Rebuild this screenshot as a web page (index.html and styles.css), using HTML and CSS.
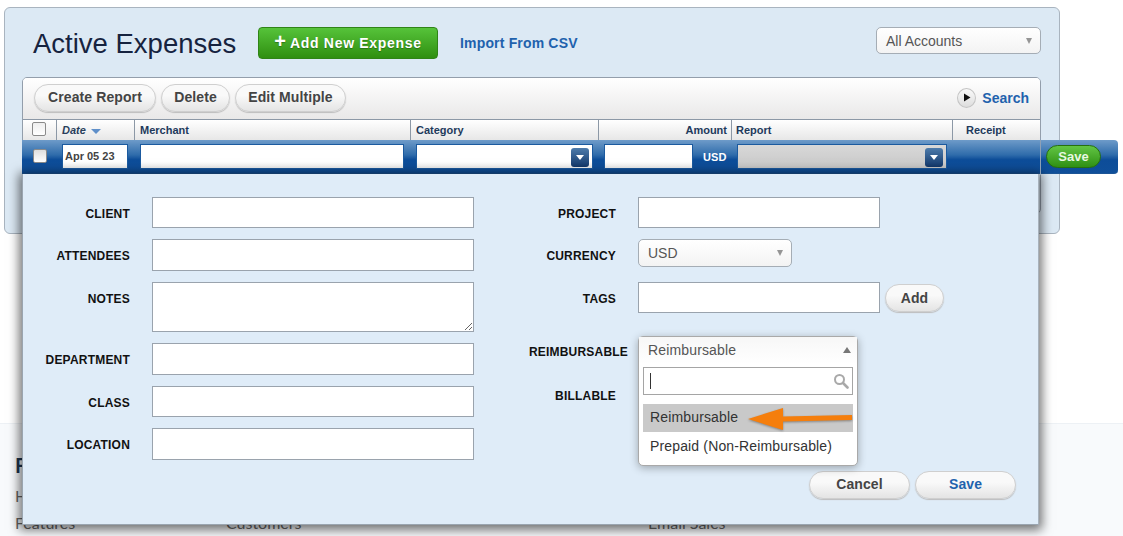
FILE: index.html
```html
<!DOCTYPE html>
<html lang="en">
<head>
<meta charset="utf-8">
<title>Active Expenses</title>
<link rel="stylesheet" href="styles.css">
</head>
<body>
<main class="panel">
  <header class="head">
    <h1 class="title">Active Expenses</h1>
    <button class="add-btn"><span class="plus">+</span> Add New Expense</button>
    <a class="import">Import From CSV</a>
    <div class="select accounts"><span>All Accounts</span><i class="tri"></i></div>
  </header>
  <section class="card">
    <div class="toolbar">
      <button class="pill pill-create">Create Report</button>
      <button class="pill pill-delete">Delete</button>
      <button class="pill pill-edit">Edit Multiple</button>
      <div class="search">
        <span class="play"><svg width="8" height="9" viewBox="0 0 8 9"><path d="M1 0.5 L7.5 4.5 L1 8.5 Z" fill="#111"/></svg></span>
        <a>Search</a>
      </div>
    </div>
    <div class="thead">
      <div class="th th-check"><span class="check"></span></div>
      <div class="th th-date"><em>Date</em><i class="sort"></i></div>
      <div class="th th-pad">Merchant</div>
      <div class="th th-pad">Category</div>
      <div class="th th-right">Amount</div>
      <div class="th">Report</div>
      <div class="th th-receipt">Receipt</div>
    </div>
    <div class="edit-row">
      <span class="check row-check"></span>
      <div class="cell date-cell">Apr 05 23</div>
      <div class="cell merchant-cell"></div>
      <div class="cell cat-cell"><span class="drop"><i></i></span></div>
      <div class="cell amount-cell"></div>
      <span class="usd">USD</span>
      <div class="cell report-cell"><span class="drop"><i></i></span></div>
      <button class="save-green">Save</button>
    </div>
    <div class="modal">
      <div class="columns">
        <div class="col">
          <div class="row"><label class="lbl">CLIENT</label><input class="field wide"></div>
          <div class="row"><label class="lbl">ATTENDEES</label><input class="field wide"></div>
          <div class="row"><label class="lbl">NOTES</label><textarea class="field wide notes"></textarea></div>
          <div class="row"><label class="lbl">DEPARTMENT</label><input class="field wide"></div>
          <div class="row"><label class="lbl">CLASS</label><input class="field wide"></div>
          <div class="row"><label class="lbl">LOCATION</label><input class="field wide"></div>
        </div>
        <div class="col">
          <div class="row"><label class="lbl">PROJECT</label><input class="field mid"></div>
          <div class="row"><label class="lbl">CURRENCY</label><div class="select currency"><span>USD</span><i class="tri"></i></div></div>
          <div class="row row-tags"><label class="lbl">TAGS</label><input class="field mid"><button class="pill add-tag">Add</button></div>
          <div class="row row-reimb">
            <label class="lbl lbl-long">REIMBURSABLE</label>
            <div class="dropdown">
              <div class="dd-head"><span>Reimbursable</span><i class="tri up"></i></div>
              <div class="dd-search">
                <span class="caret"></span>
                <svg width="16" height="16" viewBox="0 0 16 16"><circle cx="6.5" cy="6.5" r="4.5" fill="none" stroke="#a9a9a9" stroke-width="2"/><path d="M10 10 L14.5 14.5" stroke="#a9a9a9" stroke-width="2.6" stroke-linecap="round"/></svg>
              </div>
              <div class="dd-item active">Reimbursable</div>
              <div class="dd-item">Prepaid (Non-Reimbursable)</div>
              <svg class="arrow" width="110" height="28" viewBox="0 0 110 28"><path d="M2 15 L37 4 L37 12.500 L106 11 L106 16 L37 17.500 L37 26 Z" fill="#f57e0c"/></svg>
            </div>
          </div>
          <div class="row row-bill"><label class="lbl">BILLABLE</label></div>
        </div>
      </div>
      <div class="actions">
        <button class="pill wide-pill">Cancel</button>
        <button class="pill wide-pill blue">Save</button>
      </div>
    </div>
  </section>
</main>
<footer class="footer">
  <div class="fcol fcol-1"><h4>Features</h4><p>Home</p><p>Features</p></div>
  <div class="fcol fcol-2"><p>Customers</p></div>
  <div class="fcol"><p>Email Sales</p></div>
</footer>
</body>
</html>
```
FILE: styles.css
```css
* { box-sizing: border-box; }
html, body { margin: 0; height: 536px; overflow: hidden; background: #fff; }
body { font-family: "Liberation Sans", Arial, sans-serif; color: #222; }
button { font-family: inherit; cursor: pointer; }

.panel {
  margin: 7px 0 0 4px; width: 1056px; height: 227px;
  background: #dce9f4; border: 1px solid #a9b4bf; border-radius: 6px;
  position: relative; z-index: 2;
}
.head { display: flex; align-items: flex-start; height: 69px; padding: 19px 18px 0 28px; }
.title { margin: 0; font-size: 27.500px; line-height: 33px; font-weight: 400; color: #16233f; width: 225px; }
.add-btn {
  width: 180px; height: 32px; padding: 0 0 2px; border: 1px solid #2f8416; border-radius: 4px;
  background: linear-gradient(#56c33a, #2f8f10); color: #fff;
  font-size: 14px; font-weight: 700; letter-spacing: .7px; text-shadow: 0 1px 1px rgba(0,0,0,.3);
}
.plus { font-size: 20px; line-height: 14px; letter-spacing: 0; }
.import { margin: 8px 0 0 22px; font-size: 14px; font-weight: 700; color: #1f62ad; letter-spacing: .17px; }
.select {
  display: flex; align-items: center; justify-content: space-between;
  border: 1px solid #a5adb5; border-radius: 5px; background: linear-gradient(#fff, #f3f3f3);
  color: #555; font-size: 14px; padding: 0 8px 0 9px;
}
.accounts { margin-left: auto; width: 165px; height: 27px; }
.tri { width: 0; height: 0; border-left: 3.500px solid transparent; border-right: 3.500px solid transparent; border-top: 6px solid #959595; }
.tri.up { border-left-width: 4.500px; border-right-width: 4.500px; border-top: 0; border-bottom: 6px solid #777; }

.card {
  position: relative; margin-left: 17px; width: 1019px; height: 137px;
  border: 1px solid #939eab; border-radius: 5px; background: #dce9f4;
}
.card::after {
  content: ""; position: absolute; right: -1px; top: 60px; width: 1px; height: 37px; background: #8ea0b5;
}
.toolbar {
  display: flex; align-items: center; gap: 5px; height: 42px; padding: 0 11px 2px;
  background: linear-gradient(#fff, #e9e8e8); border-bottom: 1px solid #8c98a6; border-radius: 4px 4px 0 0;
}
.pill {
  height: 28px; padding: 0 0 2px; border: 1px solid #cfcfcf; border-radius: 14px;
  background: linear-gradient(#f9f9f9 40%, #e4e4e4); box-shadow: 0 1px 1px #bdbdbd;
  color: #444; font-size: 14px; font-weight: 700; letter-spacing: .1px;
}
.pill-create { width: 122px; }
.pill-delete { width: 69px; }
.pill-edit { width: 111px; }
.search { margin-left: auto; display: flex; align-items: center; gap: 6px; font-size: 14px; font-weight: 700; color: #1f62ad; }
.play {
  width: 19px; height: 20px; border-radius: 50%; border: 1px solid #c4c4c4; background: linear-gradient(#fafafa, #ddd);
  display: flex; align-items: center; justify-content: center;
}
.thead {
  display: grid; grid-template-columns: 34px 78px 276px 188px 133px 221px 87px; height: 20px;
  background: linear-gradient(#fff, #e7e7e7);
}
.th {
  font-size: 11px; font-weight: 700; line-height: 20px; color: #1e3a5c; padding-left: 4px;
  border-right: 1px solid #8c98a6; white-space: nowrap;
}
.th:last-child { border-right: 0; }
.th-pad { padding-left: 5px; }
.th-check { padding: 2px 0 0 9px; }
.th-date { padding-left: 5px; display: flex; align-items: center; gap: 5px; }
.th-date em { color: #2a3f5c; }
.th-right { text-align: right; padding: 0 4px 0 0; }
.th-receipt { padding-left: 13px; }
.sort { width: 0; height: 0; border-left: 5px solid transparent; border-right: 5px solid transparent; border-top: 5px solid #5f8fc9; margin-top: 2px; }
.check { display: block; width: 14px; height: 14px; border: 1px solid #8a8a8a; border-radius: 2px; background: linear-gradient(#eee, #fff); }

.edit-row {
  position: relative; display: flex; align-items: center; margin-left: -1px; width: 1096px; height: 34px;
  background: linear-gradient(#6e9bc9 0, #2f6cab 45%, #0d4d99 60%, #0f4f9a 100%);
  border-bottom: 1px solid #1c5596; border-radius: 0 4px 4px 0; padding: 0 0 1px 11px;
}
.row-check { background: linear-gradient(#ddd, #fff); }
.cell {
  height: 25px; background: linear-gradient(#fff 70%, #f2f2f2); border: 1px solid #1b5a9f;
  font-size: 11px; font-weight: 700; line-height: 23px; color: #444; position: relative;
}
.date-cell { width: 66px; margin-left: 15px; padding-left: 2px; }
.merchant-cell { width: 264px; margin-left: 12px; }
.cat-cell { width: 177px; margin-left: 12px; }
.amount-cell { width: 89px; margin-left: 11px; }
.report-cell { width: 210px; margin-left: 10px; background: linear-gradient(#d8d8d8, #c8c8c8); }
.usd { width: 24px; margin-left: 10px; font-size: 11px; font-weight: 700; letter-spacing: .1px; color: #fff; position: relative; top: 1px; }
.drop {
  position: absolute; right: 3px; top: 3px; width: 18px; height: 19px; border-radius: 3px;
  background: linear-gradient(#4d7bab, #12386b); display: flex; align-items: center; justify-content: center;
}
.drop i { width: 0; height: 0; border-left: 4px solid transparent; border-right: 4px solid transparent; border-top: 5px solid #fff; }
.save-green {
  margin-left: 99px; width: 55px; height: 23px; padding: 0; border: 1px solid #26700f; border-radius: 12px;
  background: linear-gradient(#62c544, #2f9014); color: #e8f8e0; font-size: 13px; font-weight: 700;
}

.modal {
  position: relative; margin-left: -1px; width: 1017px; height: 351px; display: flex; flex-direction: column;
  background: #dfecf8; border: 1px solid #9aa5b0; border-right-color: #a8b2bc; border-top: 0;
  box-shadow: 0 2px 10px 3px rgba(0,0,0,.55);
}
.columns { display: flex; padding-top: 22.800px; }
.col { width: 486px; }
.row { display: flex; align-items: flex-start; margin-bottom: 11px; }
.row:last-child { margin-bottom: 0; }
.lbl {
  width: 107px; margin-right: 22px; height: 31.500px; text-align: right; font-size: 12px; font-weight: 700;
  letter-spacing: .2px; line-height: 35px; color: #111; white-space: nowrap; flex: none;
}
.lbl-long { width: 119px; margin-right: 10px; line-height: 32px; }
.field { display: block; height: 31.500px; margin: 0; padding: 2px 4px; background: #fff; border: 1px solid #9aa3ad; font-family: inherit; }
.wide { width: 322px; }
.mid { width: 242px; }
.notes { height: 50.500px; }
.currency { width: 154px; height: 28px; }
.row-tags { height: 43.200px; }
.add-tag { margin: 2px 0 0 5px; width: 59px; padding: 0; }
.row-reimb { position: relative; height: 48px; margin-bottom: 0; }
.row-bill .lbl { line-height: 24px; }
.dropdown {
  position: absolute; left: 129px; top: 0; z-index: 3; width: 220px; height: 130px;
  background: #fff; border: 1px solid #a9a9a9; border-radius: 5px; box-shadow: 0 2px 8px rgba(0,0,0,.3);
  font-size: 14px; letter-spacing: .15px; color: #444;
}
.dd-head {
  display: flex; align-items: center; justify-content: space-between; height: 27px; padding: 0 6px 0 9px;
  background: linear-gradient(#f7f7f7, #fff); color: #555;
}
.dd-search {
  display: flex; align-items: center; justify-content: space-between; height: 28px; margin: 3px 4px 9px;
  border: 1px solid #a5a5a5; padding: 0 3px 0 6px;
}
.caret { width: 1px; height: 16px; background: #333; }
.dd-item { height: 28px; margin: 0 4px; padding-left: 7px; line-height: 27px; color: #333; white-space: nowrap; }
.dd-item + .dd-item { margin-top: 1px; }
.dd-item.active { background: #c9c9c9; }
.arrow { position: absolute; left: 107px; top: 67px; filter: drop-shadow(0 1px 1px rgba(0,0,0,.35)); }

.actions { margin-top: auto; display: flex; justify-content: flex-end; gap: 5px; padding: 0 22px 25px 0; }
.wide-pill { width: 101px; }
.blue { color: #1f62ad; }

.footer {
  display: flex; align-items: flex-end; margin-top: 189px; height: 113px; padding: 0 15px 0;
  background: #f8fafc; border-top: 1px solid #edf1f5; font-family: Lato, sans-serif; font-size: 16px; color: #666;
}
.fcol h4 { margin: 0 0 5px; font-size: 20px; line-height: 24px; color: #1d3550; }
.fcol p { margin: 0; line-height: 27px; white-space: nowrap; }
.fcol-1 { width: 211px; }
.fcol-2 { width: 422px; }
```
